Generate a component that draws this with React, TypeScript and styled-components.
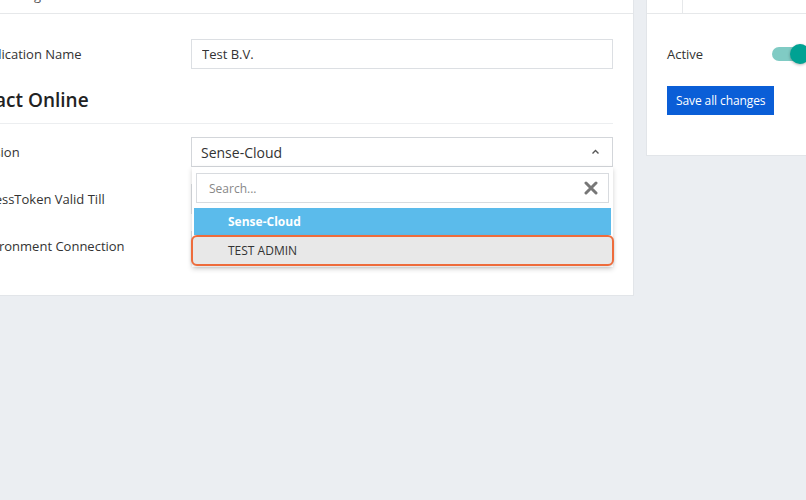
import React, { FC } from "react";
import styled, { createGlobalStyle } from "styled-components";

const GlobalStyle = createGlobalStyle`
  html, body {
    margin: 0;
    padding: 0;
    overflow: hidden;
    background: #ebeef2;
    font-family: "Open Sans", "Liberation Sans", sans-serif;
    color: #333;
  }
`;

const App: FC = () => {
  return (
    <>
      <GlobalStyle />
      <Page>
        <MainCard>
          <TabBar>
            <TabLabel>Settings</TabLabel>
          </TabBar>
          <CardBody>
            <FieldRow>
              <Label>Application Name</Label>
              <TextInput defaultValue="Test B.V." />
            </FieldRow>
            <SectionTitle>Exact Online</SectionTitle>
            <Divider />
            <FieldRow>
              <Label>Version</Label>
              <SelectWrap>
                <SelectBox>
                  <span>Sense-Cloud</span>
                  <svg width="9" height="6" viewBox="0 0 9 6">
                    <polyline
                      points="1.5,4.5 4.5,1.5 7.5,4.5"
                      fill="none"
                      stroke="#555"
                      strokeWidth="1.4"
                    />
                  </svg>
                </SelectBox>
                <Dropdown>
                  <SearchBox>
                    <SearchInput placeholder="Search..." />
                    <svg width="14" height="14" viewBox="0 0 14 14">
                      <path
                        d="M2 2 L12 12 M12 2 L2 12"
                        stroke="#777"
                        strokeWidth="3"
                        strokeLinecap="round"
                      />
                    </svg>
                  </SearchBox>
                  <Option selected>Sense-Cloud</Option>
                  <Option highlighted>TEST ADMIN</Option>
                </Dropdown>
              </SelectWrap>
            </FieldRow>
            <FieldRow>
              <Label>AccessToken Valid Till</Label>
              <TextInput />
            </FieldRow>
            <FieldRow>
              <Label>Environment Connection</Label>
              <TextInput />
            </FieldRow>
          </CardBody>
        </MainCard>

        <SideCard>
          <SideTabBar>
            <SideTab />
            <SideTab grow />
          </SideTabBar>
          <SideBody>
            <ActiveRow>
              <SideLabel>Active</SideLabel>
              <Toggle>
                <ToggleKnob />
              </Toggle>
            </ActiveRow>
            <SaveButton>Save all changes</SaveButton>
          </SideBody>
        </SideCard>
      </Page>
    </>
  );
};

const Page = styled.div`
  display: flex;
  align-items: flex-start;
  gap: 12px;
  margin: -28px 0 0 -40px;
  width: 900px;
`;

const MainCard = styled.div`
  width: 674px;
  flex: none;
  background: #fff;
  border: 1px solid #e2e5e9;
  box-sizing: border-box;
`;

const TabBar = styled.div`
  height: 41px;
  border-bottom: 1px solid #e6e8ea;
  box-sizing: border-box;
  display: flex;
  align-items: flex-end;
  padding-left: 38px;
`;

const TabLabel = styled.div`
  font-size: 13px;
  color: #555;
  line-height: 18px;
  margin-bottom: 9px;
`;

const CardBody = styled.div`
  padding: 25px 20px 34px 13px;
  display: flex;
  flex-direction: column;
`;

const FieldRow = styled.div`
  display: grid;
  grid-template-columns: 217px 422px;
  align-items: center;
  margin-bottom: 17px;
  &:last-child {
    margin-bottom: 0;
  }
`;

const Label = styled.div`
  font-size: 13px;
  color: #333;
`;

const TextInput = styled.input`
  height: 30px;
  box-sizing: border-box;
  border: 1px solid #dcdfe3;
  padding: 0 10px;
  font-family: "Open Sans", sans-serif;
  font-size: 13px;
  color: #333;
  outline: none;
`;

const SectionTitle = styled.h2`
  margin: 0;
  font-size: 19px;
  font-weight: 600;
  color: #222;
  line-height: 28px;
`;

const Divider = styled.div`
  height: 1px;
  background: #eceef0;
  margin: 9px 0 13px;
  width: 639px;
`;

const SelectWrap = styled.div`
  position: relative;
`;

const SelectBox = styled.div`
  height: 30px;
  box-sizing: border-box;
  border: 1px solid #d3d6da;
  padding: 0 9px;
  display: flex;
  align-items: center;
  justify-content: space-between;
  font-size: 14px;
  color: #333;
  svg {
    margin-right: 3px;
  }
`;

const Dropdown = styled.div`
  position: absolute;
  top: 30px;
  left: 1px;
  width: 421px;
  background: #fff;
  box-shadow: 0 2px 5px rgba(0, 0, 0, 0.18);
  padding: 6px 2px 1px;
  box-sizing: border-box;
  z-index: 5;
`;

const SearchBox = styled.div`
  height: 30px;
  margin: 0 2px 5px;
  border: 1px solid #d8dbdf;
  box-sizing: border-box;
  display: flex;
  align-items: center;
  padding: 0 10px 0 10px;
  svg {
    flex: none;
  }
`;

const SearchInput = styled.input`
  flex: 1;
  border: none;
  outline: none;
  font-family: "Open Sans", sans-serif;
  font-size: 12px;
  color: #333;
  &::placeholder {
    color: #888;
  }
`;

const Option = styled.div<{ selected?: boolean; highlighted?: boolean }>`
  height: 27px;
  display: flex;
  align-items: center;
  padding-left: 34px;
  font-size: 12px;
  box-sizing: border-box;
  color: ${(p) => (p.selected ? "#fff" : "#333")};
  font-weight: ${(p) => (p.selected ? 700 : 400)};
  background: ${(p) =>
    p.selected ? "#5bbbeb" : p.highlighted ? "#e8e8e8" : "#fff"};
  ${(p) =>
    p.highlighted &&
    `
    height: 31px;
    margin: 0 -3px 0 -3px;
    padding-left: 35px;
    border: 2px solid #ee6c3c;
    border-radius: 6px;
    box-shadow: 0 1px 3px rgba(0,0,0,0.15);
  `}
`;

const SideCard = styled.div`
  width: 200px;
  flex: none;
  background: #fff;
  border: 1px solid #e2e5e9;
  box-sizing: border-box;
`;

const SideTabBar = styled.div`
  height: 41px;
  display: flex;
  border-bottom: 1px solid #e6e8ea;
  box-sizing: border-box;
`;

const SideTab = styled.div<{ grow?: boolean }>`
  width: ${(p) => (p.grow ? "auto" : "35px")};
  flex: ${(p) => (p.grow ? 1 : "none")};
  border-right: ${(p) => (p.grow ? "none" : "1px solid #e6e8ea")};
`;

const SideBody = styled.div`
  padding: 25px 20px 40px 20px;
`;

const ActiveRow = styled.div`
  display: grid;
  grid-template-columns: 105px auto;
  align-items: center;
  height: 30px;
`;

const SideLabel = styled.div`
  font-size: 13px;
  color: #333;
`;

const Toggle = styled.div`
  position: relative;
  width: 36px;
  height: 14px;
  border-radius: 7px;
  background: #80cbc4;
`;

const ToggleKnob = styled.div`
  position: absolute;
  left: 18px;
  top: -3px;
  width: 20px;
  height: 20px;
  border-radius: 50%;
  background: #00a293;
  box-shadow: 0 1px 3px rgba(0, 0, 0, 0.3);
`;

const SaveButton = styled.button`
  margin-top: 17px;
  height: 29px;
  padding: 0 9px;
  border: none;
  background: #0a5ed7;
  color: #fff;
  font-family: "Open Sans", sans-serif;
  font-size: 12px;
  letter-spacing: -0.1px;
  cursor: pointer;
`;

export default App;
